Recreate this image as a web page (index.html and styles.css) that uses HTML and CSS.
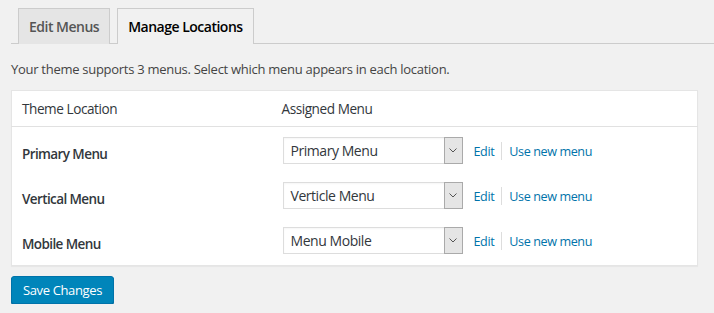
FILE: index.html
```html
<!DOCTYPE html>
<html>
<head>
<meta charset="utf-8">
<link rel="stylesheet" href="styles.css">
</head>
<body>
<div class="wrap">
  <nav class="tabs">
    <a class="tab">Edit Menus</a>
    <a class="tab active">Manage Locations</a>
  </nav>
  <p class="intro">Your theme supports 3 menus. Select which menu appears in each location.</p>
  <table class="locations">
    <thead>
      <tr><th class="col-loc">Theme Location</th><th class="col-menu">Assigned Menu</th></tr>
    </thead>
    <tbody>
      <tr>
        <td class="loc">Primary Menu</td>
        <td><div class="cell"><div class="select"><span class="val">Primary Menu</span><span class="arrow"><svg width="8" height="5" viewBox="0 0 8 5"><path d="M0.5 0.5 L4 4 L7.5 0.5" fill="none" stroke="#555" stroke-width="1"/></svg></span></div><a class="link">Edit</a><span class="sep"></span><a class="link">Use new menu</a></div></td>
      </tr>
      <tr>
        <td class="loc">Vertical Menu</td>
        <td><div class="cell"><div class="select"><span class="val">Verticle Menu</span><span class="arrow"><svg width="8" height="5" viewBox="0 0 8 5"><path d="M0.5 0.5 L4 4 L7.5 0.5" fill="none" stroke="#555" stroke-width="1"/></svg></span></div><a class="link">Edit</a><span class="sep"></span><a class="link">Use new menu</a></div></td>
      </tr>
      <tr>
        <td class="loc">Mobile Menu</td>
        <td><div class="cell"><div class="select"><span class="val">Menu Mobile</span><span class="arrow"><svg width="8" height="5" viewBox="0 0 8 5"><path d="M0.5 0.5 L4 4 L7.5 0.5" fill="none" stroke="#555" stroke-width="1"/></svg></span></div><a class="link">Edit</a><span class="sep"></span><a class="link">Use new menu</a></div></td>
      </tr>
    </tbody>
  </table>
  <button class="save">Save Changes</button>
</div>
</body>
</html>
```
FILE: styles.css
```css
html, body {
  margin: 0;
  padding: 0;
  background: #f1f1f1;
}
body {
  font-family: "Open Sans", "Noto Sans", sans-serif;
  color: #444;
  font-size: 13px;
}
.wrap {
  padding: 8px 16px 0 11px;
}
.tabs {
  display: flex;
  gap: 7px;
  padding-left: 7px;
  border-bottom: 1px solid #ccc;
  height: 35px;
  margin-right: -16px;
}
.tab {
  display: flex;
  align-items: center;
  box-sizing: border-box;
  height: 36px;
  padding: 0 10px;
  border: 1px solid #ccc;
  border-bottom: none;
  background: #e5e5e5;
  color: #555;
  font-size: 14px;
  font-weight: 600;
  letter-spacing: -0.5px;
}
.tab.active {
  background: #f1f1f1;
  color: #000;
}
.intro {
  margin: 15px 0 0;
  line-height: 20px;
  letter-spacing: -0.28px;
}
.locations {
  margin-top: 11px;
  width: 687px;
  border-collapse: collapse;
  background: #fff;
  border: 1px solid #e5e5e5;
  box-shadow: 0 1px 1px rgba(0,0,0,0.04);
}
.locations th {
  text-align: left;
  font-weight: 400;
  font-size: 13.6px;
  height: 36px;
  box-sizing: border-box;
  padding: 0 10px;
  border-bottom: 1px solid #e1e1e1;
  color: #32373c;
  letter-spacing: -0.45px;
}
.col-loc { width: 260px; }
.locations td {
  padding: 10px 10px 8px;
  vertical-align: middle;
}
.locations td.loc { padding-top: 13px; padding-bottom: 5px; }
.locations tbody tr:last-child td { padding-bottom: 11px; }
.locations tbody tr:last-child td.loc { padding-bottom: 8px; }
.loc {
  font-weight: 600;
  font-size: 13.5px;
  color: #32373c;
  letter-spacing: -0.6px;
}
.cell {
  display: flex;
  align-items: center;
  padding-left: 1px;
}
.select {
  box-sizing: border-box;
  width: 180px;
  height: 27px;
  border: 1px solid #ddd;
  display: flex;
  align-items: stretch;
  background: #fff;
  box-shadow: inset 0 1px 2px rgba(0,0,0,0.04);
}
.val {
  flex: 1;
  display: flex;
  align-items: center;
  padding-left: 7px;
  font-size: 14px;
  color: #32373c;
  letter-spacing: -0.45px;
}
.arrow {
  width: 17px;
  margin: -1px -1px -1px 0;
  border: 1px solid #aaa;
  background: #e5e5e5;
  display: flex;
  align-items: center;
  justify-content: center;
}
.link {
  color: #0073aa;
  font-size: 12.6px;
  letter-spacing: -0.4px;
  padding-top: 1px;
}
.select + .link { margin-left: 11px; }
.sep {
  width: 1px;
  height: 18px;
  background: #ddd;
  margin: 0 7px 0 7px;
}
.save {
  margin-top: 10px;
  box-sizing: border-box;
  width: 103px;
  height: 28px;
  background: #0085ba;
  border: 1px solid #0073aa;
  border-radius: 3px;
  box-shadow: 0 1px 0 #006799;
  color: #fff;
  font-family: inherit;
  font-size: 13px;
  padding: 0;
  letter-spacing: -0.35px;
}
```
